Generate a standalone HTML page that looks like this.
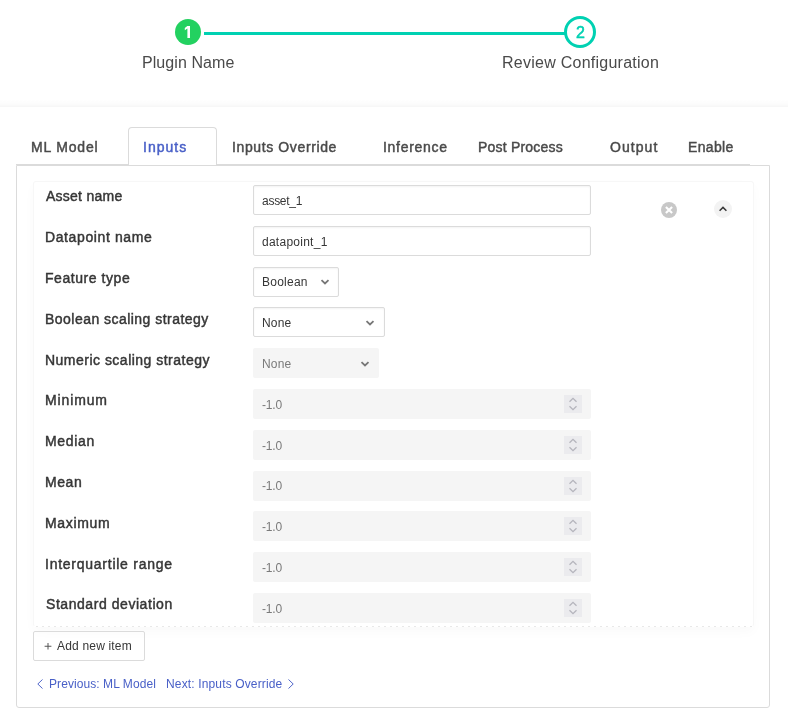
<!DOCTYPE html>
<html><head><meta charset="utf-8">
<style>
html,body{margin:0;padding:0;background:#fff;width:788px;height:723px;overflow:hidden;position:relative;font-family:"Liberation Sans",sans-serif;}
.a{position:absolute;box-sizing:border-box;}
.t{position:absolute;white-space:nowrap;line-height:1;will-change:transform;}
.inp{left:253px;width:338px;height:30px;border:1px solid #dbdbdb;border-radius:2px;background:#fff;box-shadow:inset 0 1px 2px rgba(10,10,10,.05);}
.num{left:253px;width:338px;height:30px;border-radius:2px;background:#f5f5f5;}
</style></head><body>
<div class="a " style="left:0;top:99px;width:788px;height:8px;background:linear-gradient(to bottom,rgba(0,0,0,0) 0%,rgba(0,0,0,0.012) 60%,rgba(0,0,0,0.035) 100%);"></div>
<div class="a " style="left:175px;top:19px;width:26px;height:26px;border-radius:50%;background:#23d160;"></div>
<svg class="a" style="left:175px;top:19px" width="26" height="26" viewBox="0 0 26 26"><path d="M12.3 6.9H15V18.9H12.4V9.6L9.8 11.2V9.1Z" fill="#fff"/></svg>
<div class="a " style="left:204px;top:32px;width:361px;height:3px;background:#00d1b2;"></div>
<div class="a " style="left:564px;top:16px;width:32px;height:32px;border-radius:50%;border:3px solid #00d1b2;background:#fff;"></div>
<div class="t " style="left:575.93px;top:24.56px;font-size:16px;color:#00d1b2;-webkit-text-stroke:0.55px #00d1b2;">2</div>
<div class="t " style="left:141.55px;top:55.46px;font-size:16px;color:#4a4a4a;letter-spacing:0.070px;">Plugin Name</div>
<div class="t " style="left:501.65px;top:55.46px;font-size:16px;color:#4a4a4a;letter-spacing:0.253px;">Review Configuration</div>
<div class="a " style="left:16px;top:164px;width:734px;height:1px;background:#dbdbdb;"></div>
<div class="a " style="left:128px;top:127px;width:89px;height:38px;border:1px solid #dbdbdb;border-bottom:none;border-radius:4px 4px 0 0;background:#fff;"></div>
<div class="t " style="left:31.17px;top:140.15px;font-size:14px;color:#4a4a4a;letter-spacing:0.807px;-webkit-text-stroke:0.45px #4a4a4a;">ML Model</div>
<div class="t " style="left:142.97px;top:140.15px;font-size:14px;color:#485fc7;letter-spacing:1.010px;-webkit-text-stroke:0.45px #485fc7;">Inputs</div>
<div class="t " style="left:232.07px;top:140.15px;font-size:14px;color:#4a4a4a;letter-spacing:0.618px;-webkit-text-stroke:0.45px #4a4a4a;">Inputs Override</div>
<div class="t " style="left:382.68px;top:140.15px;font-size:14px;color:#4a4a4a;letter-spacing:0.719px;-webkit-text-stroke:0.45px #4a4a4a;">Inference</div>
<div class="t " style="left:477.88px;top:140.15px;font-size:14px;color:#4a4a4a;letter-spacing:0.205px;-webkit-text-stroke:0.45px #4a4a4a;">Post Process</div>
<div class="t " style="left:609.77px;top:140.15px;font-size:14px;color:#4a4a4a;letter-spacing:1.050px;-webkit-text-stroke:0.45px #4a4a4a;">Output</div>
<div class="t " style="left:688.27px;top:140.15px;font-size:14px;color:#4a4a4a;letter-spacing:0.330px;-webkit-text-stroke:0.45px #4a4a4a;">Enable</div>
<div class="a " style="left:16px;top:165px;width:754px;height:543px;border:1px solid #dbdbdb;border-radius:0 0 3px 3px;"></div>
<div class="a " style="left:33px;top:181px;width:721px;height:446px;border:1px solid #f7f7f7;border-bottom-color:transparent;border-radius:3px;box-shadow:0 5px 12px rgba(0,0,0,0.022);"></div>
<div class="a " style="left:34px;top:626px;width:719px;height:1px;background:repeating-linear-gradient(to right,#fff 0,#fff 2px,#e8e8e8 2px,#e8e8e8 4px,#fff 4px,#fff 6px);"></div>
<div class="a " style="left:661px;top:202px;width:16px;height:16px;border-radius:50%;background:#c8c8c8;"></div>
<svg class="a" style="left:661px;top:202px" width="16" height="16" viewBox="0 0 16 16"><path d="M4.9 4.9L11.1 11.1M11.1 4.9L4.9 11.1" stroke="#fff" stroke-width="2.1"/></svg>
<div class="a " style="left:714px;top:200px;width:18px;height:18px;border-radius:50%;background:#f3f3f3;"></div>
<svg class="a" style="left:714px;top:200px" width="18" height="18" viewBox="0 0 18 18"><path d="M5.6 10.7L9 7.4L12.4 10.7" stroke="#363636" stroke-width="1.5" fill="none"/></svg>
<div class="t " style="left:45.78px;top:189.15px;font-size:14px;color:#363636;letter-spacing:0.250px;-webkit-text-stroke:0.45px #363636;">Asset name</div>
<div class="a inp" style="top:185px;"></div>
<div class="t " style="left:262.35px;top:194.84px;font-size:12px;color:#363636;letter-spacing:-0.267px;">asset_1</div>
<div class="t " style="left:45.08px;top:230.15px;font-size:14px;color:#363636;letter-spacing:0.612px;-webkit-text-stroke:0.45px #363636;">Datapoint name</div>
<div class="a inp" style="top:226px;"></div>
<div class="t " style="left:262.35px;top:235.64px;font-size:12px;color:#363636;letter-spacing:0.260px;">datapoint_1</div>
<div class="t " style="left:45.08px;top:271.15px;font-size:14px;color:#363636;letter-spacing:0.559px;-webkit-text-stroke:0.45px #363636;">Feature type</div>
<div class="a inp" style="top:267px;width:86px;"></div>
<div class="t " style="left:261.85px;top:276.44px;font-size:12px;color:#363636;letter-spacing:0.250px;">Boolean</div>
<svg class="a" style="left:320px;top:277.5px" width="10" height="8" viewBox="0 0 10 8"><path d="M1.5 2.1L5 5.4L8.5 2.1" stroke="#777" stroke-width="1.8" fill="none"/></svg>
<div class="t " style="left:45.18px;top:312.15px;font-size:14px;color:#363636;letter-spacing:0.467px;-webkit-text-stroke:0.45px #363636;">Boolean scaling strategy</div>
<div class="a inp" style="top:307px;width:132px;"></div>
<div class="t " style="left:261.95px;top:317.24px;font-size:12px;color:#363636;letter-spacing:0.200px;">None</div>
<svg class="a" style="left:365px;top:318.5px" width="10" height="8" viewBox="0 0 10 8"><path d="M1.5 2.1L5 5.4L8.5 2.1" stroke="#777" stroke-width="1.8" fill="none"/></svg>
<div class="t " style="left:45.18px;top:353.15px;font-size:14px;color:#363636;letter-spacing:0.485px;-webkit-text-stroke:0.45px #363636;">Numeric scaling strategy</div>
<div class="a num" style="top:348px;width:126px;"></div>
<div class="t " style="left:261.95px;top:358.04px;font-size:12px;color:#7a7a7a;letter-spacing:0.200px;">None</div>
<svg class="a" style="left:360px;top:359.5px" width="10" height="8" viewBox="0 0 10 8"><path d="M1.5 2.1L5 5.4L8.5 2.1" stroke="#777" stroke-width="1.8" fill="none"/></svg>
<div class="t " style="left:45.18px;top:393.15px;font-size:14px;color:#363636;letter-spacing:0.875px;-webkit-text-stroke:0.45px #363636;">Minimum</div>
<div class="a num" style="top:389px;"></div>
<div class="t " style="left:262.15px;top:398.84px;font-size:12px;color:#7a7a7a;letter-spacing:-0.200px;">-1.0</div>
<div class="a " style="left:564px;top:395px;width:18px;height:18px;background:#ebebee;"></div>
<svg class="a" style="left:564px;top:395px" width="18" height="18" viewBox="0 0 18 18"><path d="M5.5 6.8L9 3.3L12.5 6.8M5.5 11.2L9 14.7L12.5 11.2" stroke="#b5b5bd" stroke-width="1.3" fill="none"/></svg>
<div class="t " style="left:45.18px;top:434.15px;font-size:14px;color:#363636;letter-spacing:0.670px;-webkit-text-stroke:0.45px #363636;">Median</div>
<div class="a num" style="top:430px;"></div>
<div class="t " style="left:262.15px;top:439.64px;font-size:12px;color:#7a7a7a;letter-spacing:-0.200px;">-1.0</div>
<div class="a " style="left:564px;top:436px;width:18px;height:18px;background:#ebebee;"></div>
<svg class="a" style="left:564px;top:436px" width="18" height="18" viewBox="0 0 18 18"><path d="M5.5 6.8L9 3.3L12.5 6.8M5.5 11.2L9 14.7L12.5 11.2" stroke="#b5b5bd" stroke-width="1.3" fill="none"/></svg>
<div class="t " style="left:45.18px;top:475.15px;font-size:14px;color:#363636;letter-spacing:0.583px;-webkit-text-stroke:0.45px #363636;">Mean</div>
<div class="a num" style="top:471px;"></div>
<div class="t " style="left:262.15px;top:480.44px;font-size:12px;color:#7a7a7a;letter-spacing:-0.200px;">-1.0</div>
<div class="a " style="left:564px;top:477px;width:18px;height:18px;background:#ebebee;"></div>
<svg class="a" style="left:564px;top:477px" width="18" height="18" viewBox="0 0 18 18"><path d="M5.5 6.8L9 3.3L12.5 6.8M5.5 11.2L9 14.7L12.5 11.2" stroke="#b5b5bd" stroke-width="1.3" fill="none"/></svg>
<div class="t " style="left:45.18px;top:516.15px;font-size:14px;color:#363636;letter-spacing:0.675px;-webkit-text-stroke:0.45px #363636;">Maximum</div>
<div class="a num" style="top:511px;"></div>
<div class="t " style="left:262.15px;top:521.24px;font-size:12px;color:#7a7a7a;letter-spacing:-0.200px;">-1.0</div>
<div class="a " style="left:564px;top:517px;width:18px;height:18px;background:#ebebee;"></div>
<svg class="a" style="left:564px;top:517px" width="18" height="18" viewBox="0 0 18 18"><path d="M5.5 6.8L9 3.3L12.5 6.8M5.5 11.2L9 14.7L12.5 11.2" stroke="#b5b5bd" stroke-width="1.3" fill="none"/></svg>
<div class="t " style="left:44.98px;top:557.15px;font-size:14px;color:#363636;letter-spacing:0.747px;-webkit-text-stroke:0.45px #363636;">Interquartile range</div>
<div class="a num" style="top:552px;"></div>
<div class="t " style="left:262.15px;top:562.04px;font-size:12px;color:#7a7a7a;letter-spacing:-0.200px;">-1.0</div>
<div class="a " style="left:564px;top:558px;width:18px;height:18px;background:#ebebee;"></div>
<svg class="a" style="left:564px;top:558px" width="18" height="18" viewBox="0 0 18 18"><path d="M5.5 6.8L9 3.3L12.5 6.8M5.5 11.2L9 14.7L12.5 11.2" stroke="#b5b5bd" stroke-width="1.3" fill="none"/></svg>
<div class="t " style="left:45.68px;top:597.15px;font-size:14px;color:#363636;letter-spacing:0.556px;-webkit-text-stroke:0.45px #363636;">Standard deviation</div>
<div class="a num" style="top:593px;"></div>
<div class="t " style="left:262.15px;top:602.84px;font-size:12px;color:#7a7a7a;letter-spacing:-0.200px;">-1.0</div>
<div class="a " style="left:564px;top:599px;width:18px;height:18px;background:#ebebee;"></div>
<svg class="a" style="left:564px;top:599px" width="18" height="18" viewBox="0 0 18 18"><path d="M5.5 6.8L9 3.3L12.5 6.8M5.5 11.2L9 14.7L12.5 11.2" stroke="#b5b5bd" stroke-width="1.3" fill="none"/></svg>
<div class="a " style="left:33px;top:631px;width:112px;height:30px;border:1px solid #dbdbdb;border-radius:2px;"></div>
<svg class="a" style="left:43px;top:641px" width="10" height="10" viewBox="0 0 10 10"><path d="M5 2V8.5M1.6 5.25H8.4" stroke="#555" stroke-width="1"/></svg>
<div class="t " style="left:57.35px;top:639.84px;font-size:12px;color:#363636;letter-spacing:0.182px;">Add new item</div>
<svg class="a" style="left:35px;top:678px" width="10" height="12" viewBox="0 0 10 12"><path d="M7.5 1.5L2.8 6L7.5 10.5" stroke="#485fc7" stroke-width="0.95" fill="none"/></svg>
<div class="t " style="left:48.55px;top:678.04px;font-size:12px;color:#485fc7;letter-spacing:0.071px;">Previous: ML Model</div>
<div class="t " style="left:165.55px;top:678.04px;font-size:12px;color:#485fc7;letter-spacing:0.145px;">Next: Inputs Override</div>
<svg class="a" style="left:286px;top:678px" width="10" height="12" viewBox="0 0 10 12"><path d="M2.5 1.5L7.2 6L2.5 10.5" stroke="#485fc7" stroke-width="0.95" fill="none"/></svg>
</body></html>
